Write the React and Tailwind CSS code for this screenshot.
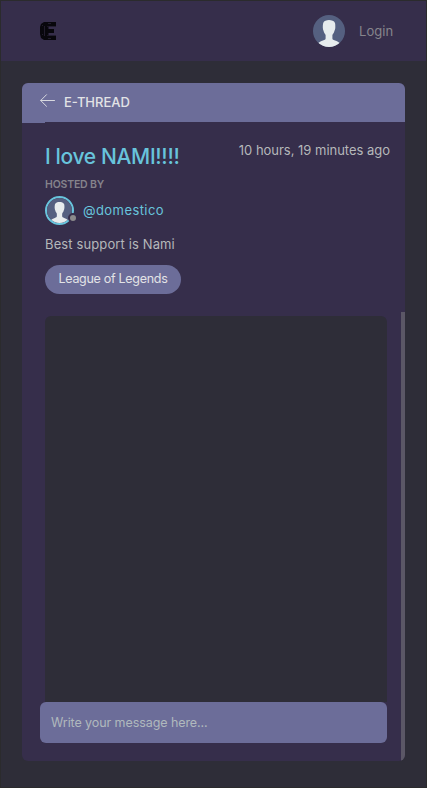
import { useId } from "react";

function Avatar({ className }) {
  const clip = useId();
  return (
    <svg viewBox="0 0 32 32" className={className} aria-hidden="true">
      <clipPath id={clip}>
        <circle cx="16" cy="16" r="16" />
      </clipPath>
      <g clipPath={`url(#${clip})`}>
        <rect width="32" height="32" fill="#556080" />
        <path
          d="M10.200 8C11 5.700 13.500 5 16 5s5.200.7 6 3c.4 1.400.3 3 .3 4.500 0 1.500-.5 2.600-.9 3.600-.4 1.700-1.300 2.700-2 3.900v3.500c0 1 1 1.500 2.600 2 2 .7 4 1.700 5.500 3.500v4H4.500v-4c1.500-1.800 3.500-2.800 5.500-3.500 1.600-.5 2.600-1 2.600-2V20c-.7-1.200-1.600-2.200-2-3.900-.4-1-.8-2.100-.8-3.600 0-1.500 0-3.100.4-4.500Z"
          fill="#e7eced"
        />
      </g>
    </svg>
  );
}

function Logo() {
  return (
    <svg viewBox="0 0 16 18" className="h-[18px] w-4" aria-label="E">
      <path d="M4 0h12v4H7v3h7v4H7v3h9v4H4l-3-2-1-4V5l1-3Z" fill="#08070c" />
      <path d="M7.500 4.500H16M7.500 13.500H16" stroke="#231e31" strokeWidth="1" />
      <path d="M5.500 4.500v9M7.500 4.500v9" stroke="#08070c" strokeWidth="2" />
      <path d="M4.500 4v10M8 1.500h3M2 3.500h1M2 12.500h1M8 16.500h3" stroke="#211c2c" strokeWidth="1" />
    </svg>
  );
}

function BackArrow() {
  return (
    <svg viewBox="0 0 15 13" className="h-[13px] w-[15px] shrink-0" fill="none" stroke="#d8d9df">
      <path d="M.7 6.500H14.500M6.500.7.7 6.500l5.800 5.800" strokeWidth="1" strokeLinecap="round" />
    </svg>
  );
}

export default function App() {
  return (
    <div className="flex h-[788px] w-full flex-col border border-[#2b2b2d] bg-[#2e2d38] font-['Inter','Open_Sans',sans-serif] text-[13px] text-[#b5b8ba]">
      <header className="flex h-[60px] shrink-0 items-center justify-between bg-[#362e4b] pr-[33px] pl-[39px]">
        <Logo />
        <div className="flex items-center">
          <Avatar className="size-8" />
          <a className="ml-[14px] w-[34px] whitespace-nowrap text-[13px] leading-5 tracking-[0.050px] text-[#86858c]">Login</a>
        </div>
      </header>

      <main className="mx-[21px] mt-[22px] flex h-[678px] flex-col overflow-hidden rounded-md bg-[#362e4b]">
        <div className="flex h-[39px] shrink-0 items-center bg-[#6c6d99] pl-[18px]">
          <div className="-mt-1">
            <BackArrow />
          </div>
          <h1 className="-mt-px ml-[9px] text-[13px] leading-5 font-medium whitespace-nowrap text-[#e2e3e6]">E-THREAD</h1>
        </div>
        <div className="h-px w-[23px] shrink-0 bg-[#6c6d99]" />

        <section className="flex h-[189px] shrink-0 flex-col items-start pr-[15px] pl-[23px]">
          <div className="flex h-[55px] w-full items-start justify-between whitespace-nowrap">
            <h2 className="pt-5 text-[21px] leading-7 font-medium tracking-[-0.350px] text-[#68c4dc]">I love NAMI!!!!</h2>
            <time className="pt-[17px] text-[13px] leading-5 tracking-[-0.020px]">10 hours, 19 minutes ago</time>
          </div>
          <p className="text-[10.500px] leading-[14px] font-semibold tracking-[-0.180px] text-[#85838b]">HOSTED BY</p>
          <div className="mt-1 flex h-[29px] items-center">
            <div className="relative size-[29px] rounded-full border-2 border-[#68c4dc]">
              <Avatar className="size-[25px]" />
              <span className="absolute -right-[6px] bottom-0 size-[10px] rounded-full border-2 border-[#362e4b] bg-[#8b8a8c]" />
            </div>
            <a className="-mt-0.5 ml-[9px] text-[13px] leading-5 tracking-[0.420px] text-[#68c4dc]">@domestico</a>
          </div>
          <p className="mt-[9px] text-[13px] leading-5 tracking-[0.120px] whitespace-nowrap">Best support is Nami</p>
          <span className="mt-[11px] flex h-[29px] w-[136px] shrink-0 items-center justify-center rounded-full bg-[#6c6d99] text-[12.500px] tracking-[-0.290px] whitespace-nowrap text-[#e2e3e6]">
            League of Legends
          </span>
        </section>

        <section className="flex min-h-0 flex-1">
          <div className="flex flex-1 flex-col pt-1 pr-[14px]">
            <div className="ml-[23px] flex-1 rounded-t-md bg-[#2e2d38]" />
            <input
              placeholder="Write your message here..."
              className="mb-[18px] ml-[18px] h-[41px] rounded-md bg-[#6c6d99] px-[11px] text-[12.500px] tracking-[-0.080px] outline-none placeholder:text-[#b0b9bd] placeholder:opacity-100"
            />
          </div>
          <div className="w-1 bg-[#5b5766]" />
        </section>
      </main>
    </div>
  );
}
